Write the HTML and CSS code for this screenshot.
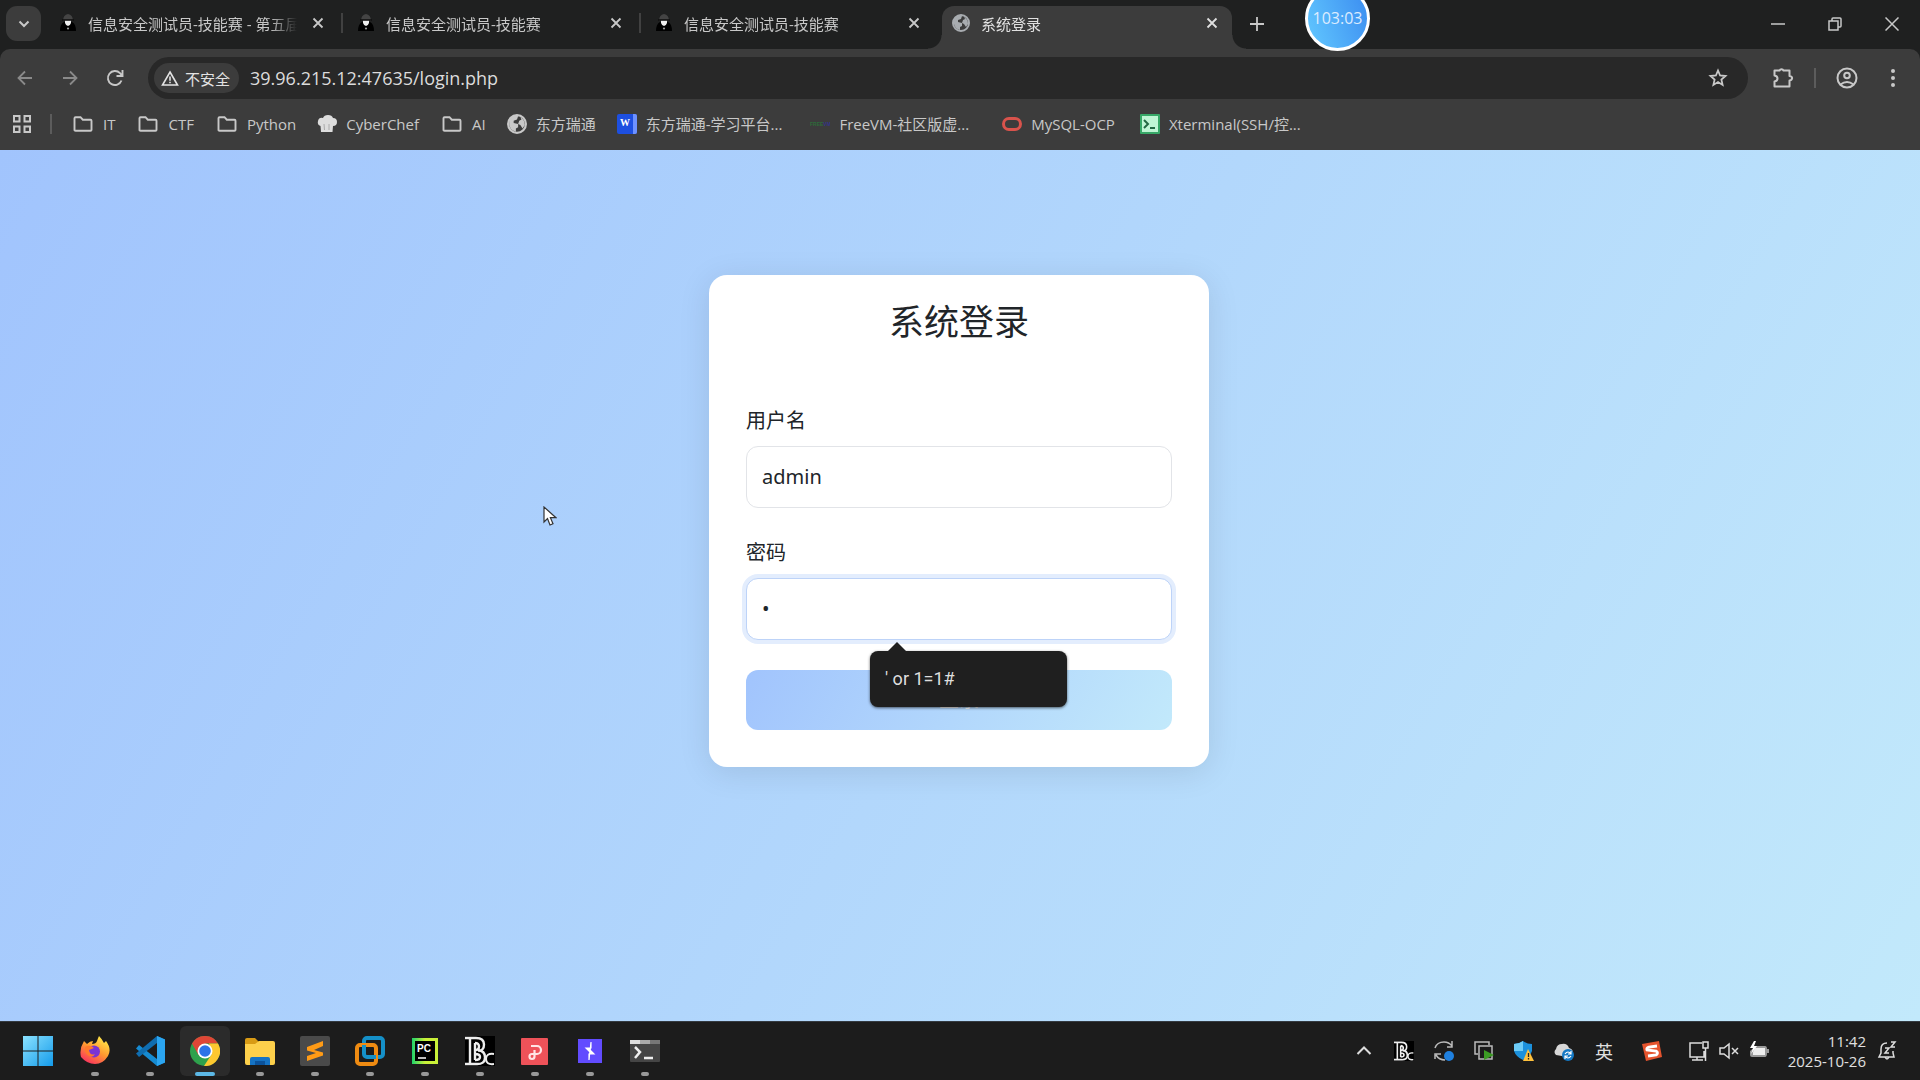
FILE: index.html
```html
<!DOCTYPE html>
<html lang="zh-CN">
<head>
<meta charset="UTF-8">
<meta name="viewport" content="width=device-width, initial-scale=1.0">
<title>系统登录</title>
<link rel="stylesheet" href="styles.css">
</head>
<body>
  <!-- shared icons -->
  <svg class="sprite" aria-hidden="true">
    <symbol id="i-close" viewBox="0 0 12 12"><path d="M1.5 1.5l9 9M10.5 1.5l-9 9" stroke="currentColor" stroke-width="1.8" fill="none"/></symbol>
    <symbol id="i-agent" viewBox="0 0 18 18">
      <path d="M4 7Q4 1 9 0Q14 1 14 7z" fill="#444"/>
      <path d="M1 17Q1 10 5 8h8q4 2 4 9z" fill="#000"/>
      <path d="M6 6h6v3q-1 3-3 3t-3-3z" fill="#eee"/>
      <path d="M3 6h12" stroke="#111" stroke-width="1.6"/>
      <circle cx="9" cy="14.5" r="1.1" fill="#999"/>
    </symbol>
    <symbol id="i-globe" viewBox="0 0 18 18">
      <circle cx="9" cy="9" r="8" fill="none" stroke="currentColor" stroke-width="2"/>
      <path d="M2 5Q5 0 10 2L9 5 6 6v2l4 1v3l-2 1v3Q3 15 2 10zM12 3q4 2 4 7l-2 3-2-3-2-1 1-3 2-1z" fill="currentColor"/>
    </symbol>
    <symbol id="i-folder" viewBox="0 0 20 18"><path d="M1.5 15V3.2q0-1 1-1h5l2.3 2.5h7.7q1 0 1 1V15q0 .8-1 .8h-15q-1 0-1-.8z" fill="none" stroke="currentColor" stroke-width="1.9"/></symbol>
    <symbol id="i-bc" viewBox="0 0 30 30">
      <path d="M0 0h30v30H0z" fill="#000"/>
      <path d="M0 2h11q8 0 8 6.500t-6 6q7 0 7 7T11 28H0M5 2v26M10 7v17M10 7q4 0 4 3.500T10 14M10 18q5 0 5 3t-5 3" fill="none" stroke="#eee" stroke-width="2.400"/>
      <path d="M29 18q-8-1-8 5t8 5" fill="none" stroke="#eee" stroke-width="2"/>
    </symbol>
  </svg>

  <header class="browser">
    <div class="tab-strip">
      <button class="tab-search" aria-label="搜索标签页"><svg width="12" height="8" viewBox="0 0 12 8"><path d="M1.500 1.500L6 6l4.500-4.500" fill="none" stroke="currentColor" stroke-width="2"/></svg></button>
      <div class="tab">
        <svg class="favicon"><use href="#i-agent"/></svg>
        <span class="tab-title">信息安全测试员-技能赛 - 第五届</span>
        <button class="tab-close" aria-label="关闭"><svg><use href="#i-close"/></svg></button>
      </div>
      <div class="tab">
        <svg class="favicon"><use href="#i-agent"/></svg>
        <span class="tab-title">信息安全测试员-技能赛</span>
        <button class="tab-close" aria-label="关闭"><svg><use href="#i-close"/></svg></button>
      </div>
      <div class="tab">
        <svg class="favicon"><use href="#i-agent"/></svg>
        <span class="tab-title">信息安全测试员-技能赛</span>
        <button class="tab-close" aria-label="关闭"><svg><use href="#i-close"/></svg></button>
      </div>
      <div class="tab active">
        <svg class="favicon globe"><use href="#i-globe"/></svg>
        <span class="tab-title">系统登录</span>
        <button class="tab-close" aria-label="关闭"><svg><use href="#i-close"/></svg></button>
      </div>
      <button class="new-tab" aria-label="新标签页"><svg width="14" height="14" viewBox="0 0 14 14"><path d="M7 0v14M0 7h14" stroke="currentColor" stroke-width="1.800"/></svg></button>
      <div class="window-controls">
        <button aria-label="最小化"><svg width="14" height="14" viewBox="0 0 14 14"><path d="M0 7h14" stroke="currentColor" stroke-width="1.500"/></svg></button>
        <button aria-label="还原"><svg width="14" height="14" viewBox="0 0 14 14"><path d="M1 4h9v9H1zM4 4V2q0-1 1-1h7q1 0 1 1v7q0 1-1 1h-2" fill="none" stroke="currentColor" stroke-width="1.500"/></svg></button>
        <button aria-label="关闭窗口"><svg width="14" height="14" viewBox="0 0 14 14"><path d="M.5.5l13 13M13.500.5l-13 13" stroke="currentColor" stroke-width="1.500"/></svg></button>
      </div>
    </div>

    <div class="toolbar">
      <button class="nav off" aria-label="后退"><svg width="16" height="16" viewBox="0 0 16 16"><path d="M15 8H2M8 1.500L1.500 8 8 14.500" fill="none" stroke="currentColor" stroke-width="1.800"/></svg></button>
      <button class="nav off" aria-label="前进"><svg width="16" height="16" viewBox="0 0 16 16"><path d="M1 8h13M8 1.500L14.500 8 8 14.500" fill="none" stroke="currentColor" stroke-width="1.800"/></svg></button>
      <button class="nav" aria-label="重新加载"><svg width="18" height="18" viewBox="0 0 18 18"><path d="M15.500 11.500A7 7 0 1 1 14 4.200L16 6.500M16.500 1v6h-6" fill="none" stroke="currentColor" stroke-width="1.900"/></svg></button>
      <div class="omnibox">
        <button class="chip"><svg width="18" height="16" viewBox="0 0 18 16"><path d="M9 2L16.500 15h-15zM9 6.500v4.200M9 11.700v1.500" fill="none" stroke="currentColor" stroke-width="1.600"/></svg>不安全</button>
        <input class="url" type="text" aria-label="地址栏" value="39.96.215.12:47635/login.php">
        <button class="star" aria-label="收藏"><svg width="20" height="20" viewBox="0 0 20 20"><path d="M10 2.500l2.100 5 5.400.5-4.100 3.600 1.200 5.300L10 14.100l-4.600 2.800 1.200-5.300L2.500 8l5.400-.5z" fill="none" stroke="currentColor" stroke-width="1.800"/></svg></button>
      </div>
      <div class="tools">
        <button aria-label="扩展程序"><svg width="22" height="22" viewBox="0 0 22 22"><path d="M2.500 3.500h5a2.200 2.200 0 0 1 4 0h6v5.500q3 .5 2.500 2.500t-2.500 2v6h-15v-5q3-.5 3-3t-3-3z" fill="none" stroke="currentColor" stroke-width="2" stroke-linejoin="round"/></svg></button>
        <span class="bar-sep"></span>
        <button aria-label="个人资料"><svg width="22" height="22" viewBox="0 0 22 22"><g fill="none" stroke="currentColor" stroke-width="2"><circle cx="11" cy="11" r="9.500"/><circle cx="11" cy="8.500" r="2.800"/><path d="M4.500 17.500q6.500-5 13 0"/></g></svg></button>
        <button aria-label="菜单"><svg width="22" height="20" viewBox="0 0 22 20"><g fill="currentColor"><circle cx="11" cy="3" r="2"/><circle cx="11" cy="10" r="2"/><circle cx="11" cy="17" r="2"/></g></svg></button>
      </div>
    </div>

    <nav class="bookmarks">
      <button class="apps" aria-label="应用"><svg width="20" height="20" viewBox="0 0 20 20"><path d="M2 2h5.500v5.500H2zM12.500 2H18v5.500h-5.500zM2 12.500h5.500V18H2zM12.500 12.500H18V18h-5.500z" fill="none" stroke="currentColor" stroke-width="2"/></svg></button>
      <span class="bar-sep"></span>
      <a href="#" class="folder"><svg><use href="#i-folder"/></svg>IT</a>
      <a href="#" class="folder"><svg><use href="#i-folder"/></svg>CTF</a>
      <a href="#" class="folder"><svg><use href="#i-folder"/></svg>Python</a>
      <a href="#"><svg viewBox="0 0 20 20"><path d="M4 18l-.5-6Q0 11 1 7t5-3q1-3 5-3t5 3q4 0 4 4t-4 4l-.5 6z" fill="#ddd"/><path d="M7 10l.5 6M12 10v6" stroke="#aaa"/></svg>CyberChef</a>
      <a href="#" class="folder"><svg><use href="#i-folder"/></svg>AI</a>
      <a href="#"><svg><use href="#i-globe"/></svg>东方瑞通</a>
      <a href="#"><svg viewBox="0 0 20 20"><rect width="20" height="20" rx="2" fill="#1d4fe0"/><path d="M16 0h2q2 0 2 2v16q0 2-2 2h-2z" fill="#6d91ff"/><text x="8" y="12" text-anchor="middle" class="w-mark">W</text></svg>东方瑞通-学习平台...</a>
      <a href="#" class="wide"><svg viewBox="0 0 20 20"><text x="0" y="12" class="vm-mark">FREE<tspan fill="#34348a">VM</tspan></text></svg>FreeVM-社区版虚...</a>
      <a href="#" class="wide"><svg viewBox="0 0 20 20"><rect x="1.500" y="4.500" width="17" height="11" rx="5.500" fill="none" stroke="#d9534c" stroke-width="3"/></svg>MySQL-OCP</a>
      <a href="#"><svg viewBox="0 0 20 20"><rect width="20" height="20" rx="1" fill="#37a867"/><rect x="2" y="2" width="16" height="16" fill="#bff5d4"/><path d="M4 6l4 4-4 4M10 14h5" fill="none" stroke="#226843" stroke-width="2"/></svg>Xterminal(SSH/控...</a>
    </nav>
  </header>

  <main class="page">
    <form class="card">
      <h1>系统登录</h1>
      <div class="field">
        <label for="username">用户名</label>
        <input type="text" id="username" value="admin">
      </div>
      <div class="field">
        <label for="password">密码</label>
        <input type="password" id="password" class="focused" value="1">
        <div class="suggestion">' or 1=1#</div>
      </div>
      <button type="button" class="submit">登录</button>
    </form>
  </main>

  <footer class="taskbar">
    <div class="apps-row">
      <button aria-label="开始"><svg viewBox="0 0 30 30"><defs><linearGradient id="win" x2="1" y2="1"><stop stop-color="#8be2ff"/><stop offset="1" stop-color="#149bea"/></linearGradient></defs><path d="M0 0h14.500v14.500H0zM15.500 0H30v14.500H15.500zM0 15.500h14.500V30H0zM15.500 15.500H30V30H15.500z" fill="url(#win)"/></svg></button>
      <button class="open" aria-label="Firefox"><svg viewBox="0 0 30 30"><defs><linearGradient id="fox" x1=".8" x2=".2" y2="1"><stop stop-color="#fff04a"/><stop offset=".5" stop-color="#ff9830"/><stop offset="1" stop-color="#f92a62"/></linearGradient></defs><path d="M4 5l3 3q3-3 6-3l-1 3q4 0 5-3t2-5q3 3 5 7l2-2q6 8 2 15-5 8-13 8T1 21Q-1 13 4 5z" fill="url(#fox)"/><circle cx="14" cy="15.500" r="6" fill="#7934d3"/><path d="M5 11q5-3 9 1l-5 2q1 6 6 4-2 4-6 2-5-3-4-9z" fill="#ff7a2c"/></svg></button>
      <button class="open" aria-label="VS Code"><svg viewBox="0 0 30 30"><path d="M22 0l8 3.500v23L22 30 1 12.500 4 9l18 14V7z" fill="#168bd2"/><path d="M22 0v7L4 21l-3-3.500z" fill="#0f6db0"/><path d="M22 0l8 3.500v23L22 30z" fill="#2ba5f0"/></svg></button>
      <button class="open current" aria-label="Chrome"><svg viewBox="0 0 30 30"><circle cx="15" cy="15" r="15" fill="#2ea14c"/><path d="M2 7.500A15 15 0 0 1 28 7.500H15L8.500 19z" fill="#df4636"/><path d="M28 7.500A15 15 0 0 1 14 30l7.500-11.500L19 7.500z" fill="#fdc82f"/><circle cx="15" cy="15" r="7.500" fill="#fff"/><circle cx="15" cy="15" r="5.800" fill="#2c73e8"/></svg></button>
      <button class="open" aria-label="文件资源管理器"><svg viewBox="0 0 30 30"><path d="M0 4q0-2 2-2h8l4 4v4H0z" fill="#d89b15"/><path d="M0 8h10l4-3h14q2 0 2 2v20q0 2-2 2H2q-2 0-2-2z" fill="#fdd04b"/><path d="M5 29v-6q0-2 2-2h16q2 0 2 2v6z" fill="#1573c4"/><path d="M10 25h10v4H10z" fill="#0b529b"/></svg></button>
      <button class="open" aria-label="Sublime Text"><svg viewBox="0 0 30 30"><rect width="30" height="30" rx="2" fill="#4a4a4a"/><path d="M7 11l16-6v5l-9 4 9 2.500v3L7 25v-5l9-3-9-2.500z" fill="#ff9b16"/></svg></button>
      <button class="open" aria-label="VMware"><svg viewBox="0 0 30 30"><g fill="none" stroke-width="4"><rect x="9" y="2" width="19" height="19" rx="3" stroke="#1590c8"/><rect x="2" y="9" width="19" height="19" rx="3" stroke="#ef8b12"/><path d="M9 15V9M15 21h6" stroke="#1590c8"/></g></svg></button>
      <button class="open" aria-label="PyCharm"><svg viewBox="0 0 30 30"><defs><linearGradient id="pc"><stop stop-color="#1fd36b"/><stop offset=".5" stop-color="#c9f038"/></linearGradient></defs><path d="M2 2h26v26H2z" fill="url(#pc)"/><path d="M5 5h20v20H5z" fill="#000"/><text x="7" y="16" class="pc-mark">PC</text><path d="M8 22h8" stroke="#fff" stroke-width="1.500"/></svg></button>
      <button class="open" aria-label="Beyond Compare"><svg><use href="#i-bc"/></svg></button>
      <button class="open" aria-label="PixPin"><svg viewBox="0 0 30 30"><rect x="1" y="2" width="27" height="27" rx="1" fill="#ee5259"/><path d="M11 10h6a4 4 0 0 1 0 8h-5a2.500 2.500 0 1 0 2.500 2.500V14" fill="none" stroke="#ffe5e5" stroke-width="2.200"/></svg></button>
      <button class="open" aria-label="Burp Suite"><svg viewBox="0 0 30 30"><rect x="3" y="3" width="24" height="24" fill="#624cff"/><path d="M16 6v6h-5l4 4zM14 24v-6h5l-4-4zM11 12l4 4M19 18l-4-4" fill="#fff" stroke="#fff" stroke-width="1.200"/></svg></button>
      <button class="open" aria-label="终端"><svg viewBox="0 0 30 30"><rect y="4" width="30" height="22" rx="1" fill="#454545"/><path d="M0 4h10v4H0z" fill="#ddd"/><path d="M10 4h10v4H10z" fill="#aaa"/><path d="M20 4h10v4H20z" fill="#777"/><path d="M5 11l5 5-5 6M14 22h9" fill="none" stroke="#eee" stroke-width="2.500"/></svg></button>
    </div>

    <div class="tray">
      <button aria-label="显示隐藏的图标"><svg viewBox="0 0 20 20"><path d="M3.500 13L10 6.500l6.500 6.500" fill="none" stroke="#ddd" stroke-width="2"/></svg></button>
      <button aria-label="Beyond Compare"><svg><use href="#i-bc"/></svg></button>
      <button aria-label="同步"><svg viewBox="0 0 20 20"><path d="M1 7q2-6 9-6 5 0 8 4M18 0v6h-5M1 18v-5h6M2 14q3 5 9 5" fill="none" stroke="#bbb" stroke-width="1.500"/><circle cx="15" cy="15" r="5" fill="#1f80df"/></svg></button>
      <button aria-label="虚拟机"><svg viewBox="0 0 20 20"><path d="M4 13H1V1h14v3M5 5h13v13H5z" fill="none" stroke="#bbb" stroke-width="1.500"/><path d="M10 9l10 5-10 5z" fill="#3b9b23"/></svg></button>
      <button aria-label="安全中心"><svg viewBox="0 0 20 20"><path d="M9 0q4 3 9 3v7q-2 6-9 9-7-3-9-9V3q5 0 9-3z" fill="#1c91dc"/><path d="M9 0v10H0V3q5 0 9-3z" fill="#6dccf7"/><path d="M14 8l6 12H9z" fill="#ffc13c"/><path d="M14.500 12v4M14.500 17v1.500" stroke="#222" stroke-width="1.300"/></svg></button>
      <button aria-label="OneDrive"><svg viewBox="0 0 20 20"><path d="M2 14q-3-3 0-6 1-5 6-5 5-1 7 4 4 1 4 5l-5 4z" fill="#d7d7d7"/><circle cx="14" cy="14" r="6" fill="#1479c5"/><path d="M11 13q3-4 6 0M17 15q-3 4-6 0M17 10v3h-3M11 18v-3h3" fill="none" stroke="#fff" stroke-width="1.200"/></svg></button>
      <button class="ime">英</button>
      <button class="sogou" aria-label="输入法"><svg viewBox="0 0 20 20"><path d="M0 3l17-3 3 16L4 20z" fill="#e5542e"/><path d="M15 5L7 6q-3 1-2 3l9 1q3 2 0 4l-8 1" fill="none" stroke="#fff" stroke-width="2.800"/></svg></button>
      <button class="status" aria-label="网络、音量和电池">
        <svg viewBox="0 0 20 20"><path d="M13 2H1v14h14v-6M8 16v3M3 19h11M14 1h5v6h-5zM16.500 7v13" fill="none" stroke="#ddd" stroke-width="1.500"/></svg>
        <svg viewBox="0 0 20 20"><path d="M1 7v6h4l5 4V3L5 7zM13 7l6 6M19 7l-6 6" fill="none" stroke="#ddd" stroke-width="1.500"/></svg>
        <svg viewBox="0 0 20 20"><path d="M7 5h9q2 0 2 3h2v4h-2q0 4-2 4H3q-2 0-2-2v-4z" fill="#999"/><path d="M6 7h10v7H4v-3z" fill="#eee"/><path d="M5 0L1 7h3l-2 6 6-8H5l2-5z" fill="#fff"/></svg>
      </button>
      <div class="clock"><span>11:42</span><span>2025-10-26</span></div>
      <button class="bell" aria-label="通知"><svg viewBox="0 0 20 20"><path d="M10 2q-6 0-6 6v4l-2 4h15l-1-4v-2M8 16q2 4 4 0M8 7h4l-4 5h4M14 1h4l-4 5h4" fill="none" stroke="#ddd" stroke-width="1.500"/></svg></button>
    </div>
  </footer>

  <!-- floating recorder timer and mouse pointer -->
  <div class="timer">103:03</div>
  <svg class="pointer" viewBox="0 0 14 20"><path d="M1 1v15l3.500-3.500L7 19l3-1.300-2.600-6H13z" fill="#fff" stroke="#333" stroke-width="1.200"/></svg>
</body>
</html>
```
FILE: styles.css
```css
* {
  box-sizing: border-box;
}

body {
  margin: 0;
  min-height: 100vh;
  display: flex;
  flex-direction: column;
  position: relative;
  overflow: hidden;
  font-family: "Open Sans", "Noto Sans CJK SC", sans-serif;
  background: #1c1c1c;
}

button {
  border: none;
  background: none;
  padding: 0;
  color: inherit;
  font: inherit;
  display: flex;
  align-items: center;
  justify-content: center;
}

input {
  font: inherit;
  color: inherit;
  outline: none;
}

.sprite {
  position: absolute;
  width: 0;
  height: 0;
}

/* browser frame */
.browser {
  background: #1f2020;
  color: #c8c8c8;
  font-size: 15px;
}

.tab-strip {
  height: 49px;
  display: flex;
  padding: 6px 0 0 6px;
}

.tab-search {
  width: 35px;
  height: 35px;
  border-radius: 11px;
  background: #3c3c3c;
  margin-right: 6px;
}

.tab {
  position: relative;
  width: 298px;
  height: 34px;
  padding: 0 17px 0 12px;
  display: flex;
  align-items: center;
}

.tab:not(.active)::after {
  content: "";
  position: absolute;
  right: 2px;
  width: 2px;
  height: 20px;
  background: #414141;
}

.tab:nth-child(4)::after {
  display: none;
}

.favicon {
  width: 18px;
  height: 18px;
  margin-right: 11px;
  flex: none;
}

.globe {
  color: #a8acb0;
}

.tab-title {
  flex: 1;
  white-space: nowrap;
  overflow: hidden;
  margin-right: 11px;
  mask-image: linear-gradient(to right, #000 87%, transparent);
}

.tab-close {
  width: 20px;
  height: 20px;
}

.tab-close svg {
  width: 12px;
  height: 12px;
}

.tab.active {
  width: 290px;
  height: 43px;
  margin-left: 1px;
  padding: 0 10px 9px;
  background: #3c3c3c;
  border-radius: 12px 12px 0 0;
  color: #e0e0e0;
}

.tab.active::before,
.tab.active::after {
  content: "";
  position: absolute;
  bottom: 0;
  width: 14px;
  height: 14px;
}

.tab.active::before {
  left: -14px;
  background: radial-gradient(circle at 0 0, transparent 13px, #3c3c3c 14px);
}

.tab.active::after {
  right: -14px;
  background: radial-gradient(circle at 100% 0, transparent 13px, #3c3c3c 14px);
}

.new-tab {
  width: 34px;
  height: 35px;
  margin-left: 8px;
}

.window-controls {
  display: flex;
  height: 35px;
  margin-left: auto;
}

.window-controls button {
  width: 57px;
}

.toolbar {
  height: 58px;
  padding: 0 16px 0 2px;
  display: flex;
  align-items: center;
  background: #3c3c3c;
  border-radius: 10px 10px 0 0;
}

.nav {
  width: 45px;
  height: 40px;
}

.off {
  color: #8a8a8a;
}

.omnibox {
  flex: 1;
  height: 42px;
  margin-left: 11px;
  padding: 0 20px 0 6px;
  display: flex;
  align-items: center;
  background: #282828;
  border-radius: 21px;
}

.chip {
  width: 85px;
  height: 30px;
  padding-right: 2px;
  gap: 6px;
  border-radius: 15px;
  background: #3c3c3c;
  color: #e3e3e3;
}

.url {
  flex: 1;
  margin-left: 11px;
  padding: 0;
  border: none;
  background: none;
  font-size: 18px;
  color: #dcdcdc;
}

.tools {
  display: flex;
  align-items: center;
  margin-left: 24px;
  gap: 20px;
}

.tools button:last-child {
  margin-left: 4px;
}

.bar-sep {
  width: 2px;
  height: 20px;
  background: #5c5c5c;
}

.bookmarks {
  height: 43px;
  padding: 0 12px 10px;
  display: flex;
  align-items: center;
  background: #3c3c3c;
}

.apps {
  margin-right: 18px;
}

.bookmarks a {
  display: flex;
  align-items: center;
  gap: 9px;
  margin-left: 21px;
  color: inherit;
  text-decoration: none;
  white-space: nowrap;
}

.bookmarks a svg {
  width: 20px;
  height: 20px;
}

.bookmarks .folder {
  gap: 10px;
  margin-left: 23px;
}

.bookmarks .bar-sep + .folder {
  margin-left: 21px;
}

.bookmarks .wide {
  margin-left: 28px;
}

.bookmarks .wide + .wide {
  margin-left: 33px;
}

.bookmarks a:last-child {
  margin-left: 25px;
}

.w-mark {
  font: bold 10px "Liberation Serif", serif;
  fill: #fff;
}

.vm-mark {
  font: bold 5px "Liberation Sans", sans-serif;
  fill: #2d6b3a;
}

/* login page */
.page {
  flex: 1;
  padding: 125px 2px 0 0;
  background: linear-gradient(120deg, #a1c4fd 0%, #c2e9fb 100%);
}

.card {
  width: 500px;
  margin: 0 auto;
  padding: 26px 37px 37px;
  background: #fff;
  border-radius: 18px;
  box-shadow: 0 5px 32px rgba(0, 0, 0, 0.1);
  color: #212529;
  font-size: 20px;
}

.card h1 {
  margin: 0 0 63px;
  font-size: 35px;
  font-weight: 400;
  line-height: 42px;
  text-align: center;
}

.field {
  position: relative;
  margin-bottom: 30px;
}

.field label {
  display: block;
  margin-bottom: 10px;
  line-height: 30px;
}

.field input {
  display: block;
  width: 100%;
  height: 62px;
  padding: 0 15px 2px;
  border: 1px solid #e2e4e8;
  border-radius: 12px;
  font-family: "Noto Sans", sans-serif;
}

.field .focused {
  border-color: #bdd3f8;
  box-shadow: 0 0 0 4px #e3edfd;
}

.suggestion {
  position: absolute;
  top: 113px;
  left: 124px;
  z-index: 1;
  width: 197px;
  height: 56px;
  padding-left: 15px;
  line-height: 56px;
  font-family: Roboto, sans-serif;
  font-size: 18px;
  color: #dedede;
  background: #1f1f1f;
  border-radius: 8px;
  box-shadow: 0 1px 3px rgba(0, 0, 0, 0.6);
}

.suggestion::before {
  content: "";
  position: absolute;
  left: 18px;
  top: -9px;
  border: 9px solid transparent;
  border-top: none;
  border-bottom-color: #1f1f1f;
}

.submit {
  width: 100%;
  height: 60px;
  padding-bottom: 4px;
  border-radius: 12px;
  color: #fff;
  background: linear-gradient(120deg, #a1c4fd 0%, #c2e9fb 100%);
}

/* taskbar */
.taskbar {
  height: 59px;
  padding: 0 20px 0 13px;
  display: flex;
  align-items: center;
  justify-content: space-between;
  background: #1c1c1c;
  border-top: 1px solid #343a40;
  color: #e0e0e0;
}

.apps-row {
  display: flex;
  gap: 5px;
}

.apps-row button {
  position: relative;
  width: 50px;
  height: 50px;
  border-radius: 6px;
}

.apps-row button:first-child {
  margin-right: 2px;
}

.apps-row svg {
  width: 30px;
  height: 30px;
}

.open::after {
  content: "";
  position: absolute;
  bottom: 0;
  width: 8px;
  height: 4px;
  border-radius: 2px;
  background: #999;
}

.current {
  background: #2b2b2b;
}

.current::after {
  width: 20px;
  background: #5cb8e6;
}

.pc-mark {
  font: bold 10px "Liberation Sans", sans-serif;
  fill: #fff;
}

.tray {
  display: flex;
  align-items: center;
}

.tray button {
  width: 40px;
  height: 40px;
}

.tray svg {
  width: 20px;
  height: 20px;
}

.ime {
  font-size: 18px;
}

.tray .sogou {
  width: 56px;
}

.tray .status {
  width: 98px;
  gap: 10px;
}

.clock {
  width: 88px;
  text-align: right;
  font-size: 15px;
  line-height: 20px;
}

.clock span {
  display: block;
}

.tray .bell {
  width: 34px;
  padding-left: 8px;
}

/* things floating over the desktop */
.timer {
  position: absolute;
  left: 1305px;
  top: -14px;
  width: 65px;
  height: 65px;
  border: 3px solid #fff;
  border-radius: 50%;
  background: linear-gradient(70deg, #62c8ff, #3b8cf0);
  color: #dcecff;
  font-size: 16px;
  line-height: 58px;
  text-align: center;
}

.pointer {
  position: absolute;
  left: 543px;
  top: 506px;
  width: 14px;
  height: 20px;
}
```
